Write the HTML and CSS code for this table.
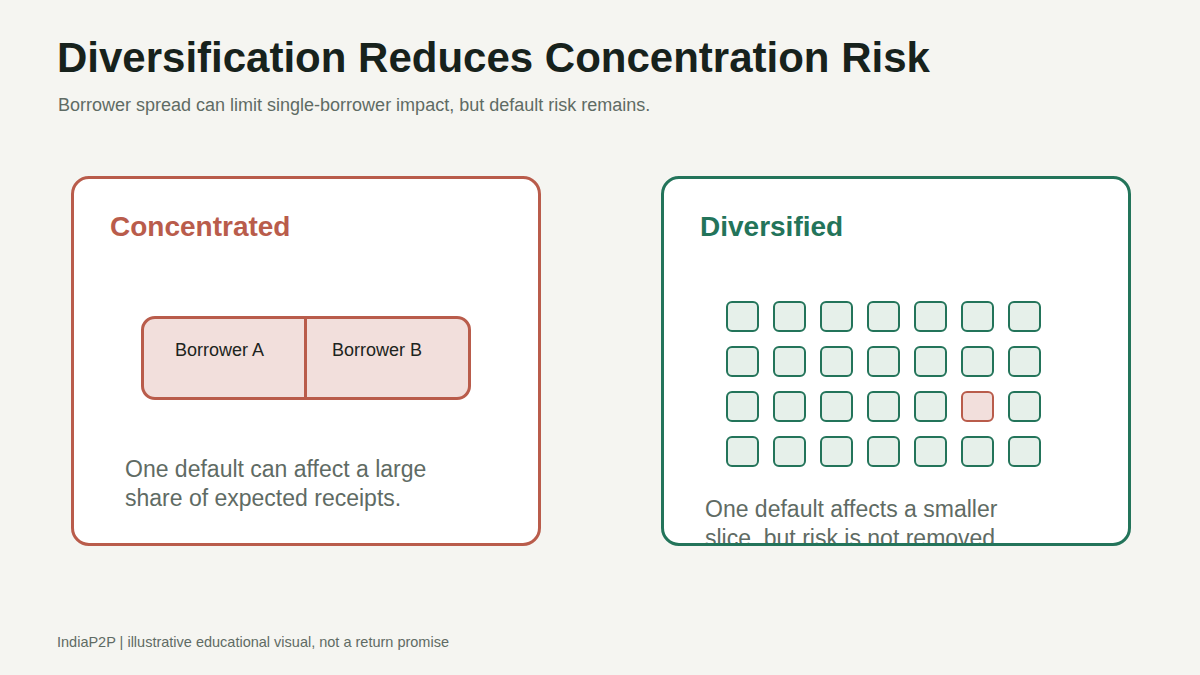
FILE: index.html
```html
<!DOCTYPE html>
<html lang="en">
<head>
<meta charset="utf-8">
<title>Diversification Reduces Concentration Risk</title>
<link rel="stylesheet" href="styles.css">
</head>
<body>
<div class="page">
  <h1 class="title">Diversification Reduces Concentration Risk</h1>
  <p class="subtitle">Borrower spread can limit single-borrower impact, but default risk remains.</p>
  <div class="cards">
    <section class="card card-red">
      <h2 class="card-title">Concentrated</h2>
      <div class="borrowers">
        <div class="borrower borrower-a">Borrower A</div>
        <div class="borrower borrower-b">Borrower B</div>
      </div>
      <p class="desc desc-left">One default can affect a large<br>share of expected receipts.</p>
    </section>
    <section class="card card-green">
      <h2 class="card-title">Diversified</h2>
      <div class="grid">
        <div class="cell"></div><div class="cell"></div><div class="cell"></div><div class="cell"></div><div class="cell"></div><div class="cell"></div><div class="cell"></div>
        <div class="cell"></div><div class="cell"></div><div class="cell"></div><div class="cell"></div><div class="cell"></div><div class="cell"></div><div class="cell"></div>
        <div class="cell"></div><div class="cell"></div><div class="cell"></div><div class="cell"></div><div class="cell"></div><div class="cell cell-default"></div><div class="cell"></div>
        <div class="cell"></div><div class="cell"></div><div class="cell"></div><div class="cell"></div><div class="cell"></div><div class="cell"></div><div class="cell"></div>
      </div>
      <p class="desc desc-right">One default affects a smaller<br>slice, but risk is not removed.</p>
    </section>
  </div>
  <p class="footer">IndiaP2P | illustrative educational visual, not a return promise</p>
</div>
</body>
</html>
```

FILE: styles.css
```css
* { box-sizing: border-box; }
html, body { margin: 0; padding: 0; }
body {
  background: #f5f5f1;
  font-family: "Liberation Sans", Arial, sans-serif;
  width: 1200px;
  height: 675px;
  overflow: hidden;
}
.page {
  display: flex;
  flex-direction: column;
  height: 675px;
  padding: 34px 0 24px 57px;
}
.title {
  margin: 0;
  font-size: 42px;
  line-height: 48px;
  font-weight: 700;
  color: #17221c;
}
.subtitle {
  margin: 12px 0 0 1px;
  font-size: 18px;
  line-height: 22px;
  color: #5f6b64;
}
.cards {
  display: flex;
  gap: 120px;
  margin: 60px 0 0 14px;
}
.card {
  width: 470px;
  height: 370px;
  background: #ffffff;
  border: 3px solid;
  border-radius: 18px;
  padding: 32px 0 0 36px;
  overflow: hidden;
  display: flex;
  flex-direction: column;
  align-items: flex-start;
}
.card-red { border-color: #b95c4b; }
.card-green { border-color: #23745a; }
.card-title {
  margin: 0;
  font-size: 28px;
  line-height: 32px;
  font-weight: 700;
}
.card-red .card-title { color: #b95c4b; }
.card-green .card-title { color: #23745a; }

.borrowers {
  display: flex;
  margin: 73px 0 0 31px;
  width: 330px;
  height: 84px;
  border: 3px solid #b95c4b;
  border-radius: 14px;
  background: #f2dfdc;
  overflow: hidden;
}
.borrower {
  padding-top: 20px;
  font-size: 18px;
  line-height: 22px;
  color: #1d2420;
}
.borrower-a { width: 163px; padding-left: 31px; border-right: 3px solid #b95c4b; }
.borrower-b { flex: 1; padding-left: 25px; }

.desc {
  margin: 0;
  font-size: 23px;
  line-height: 29px;
  color: #5f6b64;
}
.desc-left { margin: 55px 0 0 15px; }
.desc-right { margin: 28px 0 0 5px; }

.grid {
  display: grid;
  grid-template-columns: repeat(7, 33px);
  grid-auto-rows: 31px;
  gap: 14px;
  margin: 58px 0 0 26px;
}
.cell {
  border: 2px solid #23745a;
  border-radius: 6px;
  background: #e6f0ea;
}
.cell-default {
  border-color: #b95c4b;
  background: #f2dfdc;
}
.footer {
  margin: auto 0 0 0;
  font-size: 14.5px;
  line-height: 18px;
  color: #5f6b64;
}
```
